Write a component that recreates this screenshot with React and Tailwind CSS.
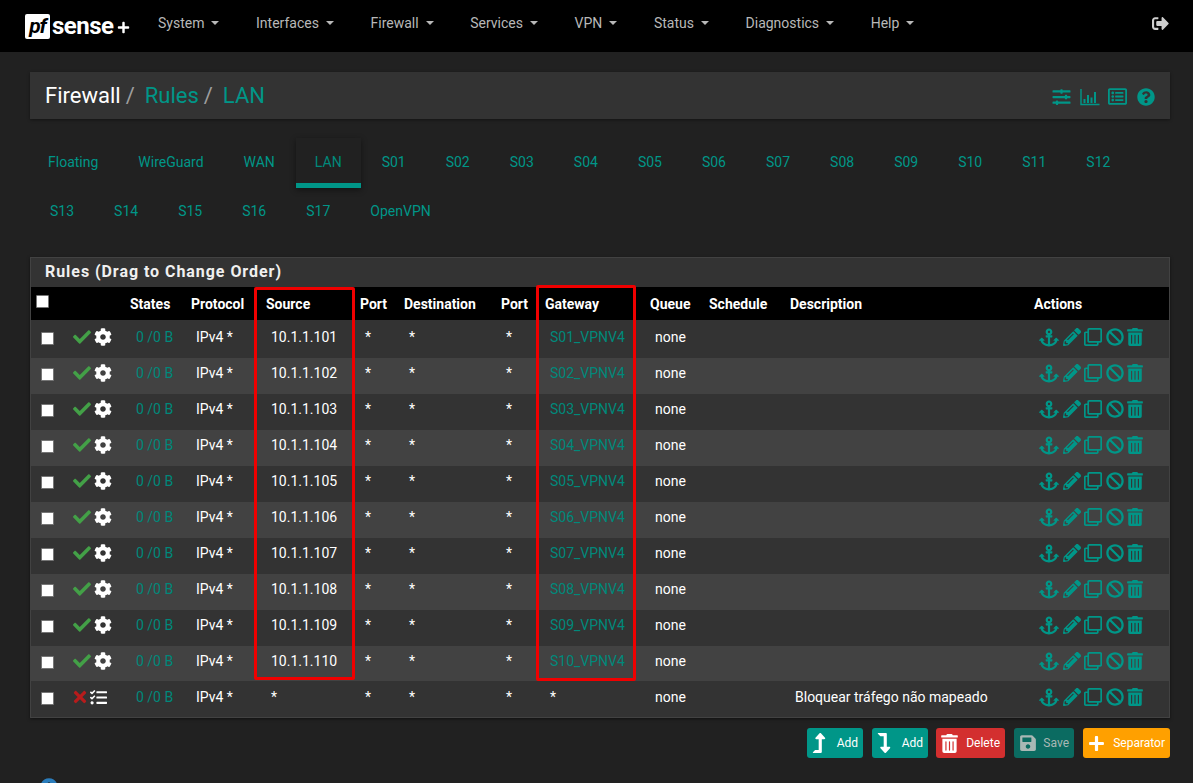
import React from "react";
import { FaCheck, FaCog, FaAnchor, FaPencilAlt, FaRegClone, FaBan, FaTrashAlt, FaSlidersH, FaRegListAlt, FaQuestionCircle, FaSignOutAlt, FaLevelUpAlt, FaLevelDownAlt, FaSave, FaPlus, FaTimes, FaTasks, FaInfoCircle } from "react-icons/fa";

const nav = ["System", "Interfaces", "Firewall", "Services", "VPN", "Status", "Diagnostics", "Help"];
const tabsTop = ["Floating", "WireGuard", "WAN", "LAN", "S01", "S02", "S03", "S04", "S05", "S06", "S07", "S08", "S09", "S10", "S11", "S12"];
const tabsBottom = ["S13", "S14", "S15", "S16", "S17", "OpenVPN"];
const heads = ["", "", "States", "Protocol", "Source", "Port", "Destination", "Port", "Gateway", "Queue", "Schedule", "Description", "Actions"];
const widths = [35, 59, 61, 75, 94, 44, 97, 44, 105, 59, 81, 244, 140];
const rows = Array.from({ length: 10 }, (_, i) => ({
  source: `10.1.1.1${String(i + 1).padStart(2, "0")}`,
  gateway: `S${String(i + 1).padStart(2, "0")}_VPNV4`,
  desc: "",
}));
rows.push({ source: "*", gateway: "*", desc: "Bloquear tráfego não mapeado", blocked: true });

function ChartIcon() {
  return (
    <svg width="20" height="18" viewBox="0 0 20 18" fill="none" stroke="currentColor">
      <path d="M1 1V16.5H19.5" strokeWidth="1.4" />
      <path d="M4.5 15V11M8 15V7M11.5 15V9.5M15 15V4" strokeWidth="2" />
    </svg>
  );
}

function Btn({ icon, label, className, textClass = "text-white" }) {
  return (
    <div className={`h-[30px] rounded-[3px] flex items-center justify-between px-[5px] text-[12px] ${className} ${textClass}`}>
      {icon}
      <span>{label}</span>
    </div>
  );
}

function Row({ r, i }) {
  const bg = i % 2 === 0 ? "bg-[#333333]" : "bg-[#424242]";
  const pt = i === 0 ? "pt-[7px]" : i === 10 ? "pt-[6px]" : "pt-[5px]";
  const cell = `align-top pl-[10px] pb-0 ${pt}`;
  const rowH = i === 0 ? "h-[38px]" : i === 9 ? "h-[35px]" : "h-[36px]";
  return (
    <tr className={`${bg} ${rowH} text-white`}>
      <td className={cell}>
        <div className="w-[13px] h-[13px] bg-white border border-[#767676] rounded-[1px] mt-[5px]" />
      </td>
      <td className={`align-top pl-[6px] ${pt}`}>
        <div className="flex items-center h-[20px]">
          {r.blocked ? (
            <>
              <FaTimes className="text-[#b71c1c] w-[16px] h-[18px]" />
              <FaTasks className="text-white w-[19px] h-[17px] ml-[1px]" />
            </>
          ) : (
            <>
              <FaCheck className="text-[#43a047] w-[20px] h-[18px]" />
              <FaCog className="text-white w-[18px] h-[18px] ml-[2px]" />
            </>
          )}
        </div>
      </td>
      <td className={`${cell} pl-[11px] text-[#00897b]`}>0 /0 B</td>
      <td className={cell}>IPv4 *</td>
      <td className={cell}>{r.source}</td>
      <td className={cell}>*</td>
      <td className={cell}>*</td>
      <td className={cell}>*</td>
      <td className={`${cell} pl-[9px] ${r.blocked ? "" : "text-[#00897b]"}`}>{r.gateway}</td>
      <td className={cell}>none</td>
      <td className={cell}></td>
      <td className={cell}>{r.desc}</td>
      <td className={cell}>
        <div className="flex items-center h-[20px] text-[#009688]">
          <FaAnchor className="w-[20px] h-[19px]" />
          <FaPencilAlt className="w-[18px] h-[18px] ml-[4px]" />
          <FaRegClone className="w-[18px] h-[18px] ml-[3px]" />
          <FaBan className="w-[18px] h-[18px] ml-[4px]" />
          <FaTrashAlt className="w-[16px] h-[18px] ml-[3px]" />
        </div>
      </td>
    </tr>
  );
}

export default function App() {
  return (
    <div className="h-[783px] w-[1193px] overflow-hidden bg-[#212121] [font-family:Roboto,sans-serif] text-[14px] leading-[20px]">
      <header className="h-[52px] bg-black flex items-center relative">
        <div className="ml-[25px] w-[107px] flex items-center">
          <div className="w-[25px] h-[25px] bg-white rounded-[2px] flex items-center justify-center text-black font-bold italic text-[21px] leading-none tracking-[-1px]">pf</div>
          <span className="text-white font-bold text-[24px] leading-none ml-[2px] tracking-[-0.5px]">sense</span>
          <FaPlus className="text-white w-[13px] h-[13px] ml-[3px] mt-[2px]" />
        </div>
        <nav className="ml-[26px] flex items-center gap-[36.6px] text-[#b8b8b8] -mt-[7px]">
          {nav.map((n) => (
            <div key={n} className="flex items-center">
              <span>{n}</span>
              <span className="ml-[7px] w-0 h-0 border-x-[4px] border-x-transparent border-t-[4px] border-t-[#b8b8b8]" />
            </div>
          ))}
        </nav>
        <FaSignOutAlt className="absolute right-[23px] top-[15px] text-[#cfcfcf] w-[19px] h-[17px]" />
      </header>

      <div className="mt-[20px] ml-[30px] mr-[23px] h-[47px] bg-[#333333] shadow-[0_1px_3px_rgba(0,0,0,0.4)] flex items-center justify-between pl-[15px] pr-[15px]">
        <div className="text-[22px] leading-[26px] flex text-[#009688]">
          <span className="text-white">Firewall</span>
          <span className="text-[#9e9e9e] ml-[5px]">/</span>
          <span className="ml-[10px]">Rules</span>
          <span className="text-[#9e9e9e] ml-[5px]">/</span>
          <span className="ml-[10px]">LAN</span>
        </div>
        <div className="flex items-center text-[#009688] pt-[2px]">
          <FaSlidersH className="w-[19px] h-[18px]" />
          <span className="ml-[9px] flex"><ChartIcon /></span>
          <FaRegListAlt className="w-[19px] h-[19px] ml-[8px]" />
          <FaQuestionCircle className="w-[18px] h-[18px] ml-[10px]" />
        </div>
      </div>

      <div className="mt-[19px] text-[#009688]">
        <div className="ml-[28px] flex">
          {tabsTop.map((t) =>
            t === "LAN" ? (
              <div key={t} className="h-[50px] ml-[1px] mr-[1px] px-[19px] pt-[14px] border-b-[5px] border-b-[#009688] shadow-[0_2px_6px_rgba(0,0,0,0.45)] text-[#00897b]">
                {t}
              </div>
            ) : (
              <div key={t} className="h-[50px] px-[20px] pt-[14px]">{t}</div>
            )
          )}
        </div>
        <div className="ml-[30px] flex">
          {tabsBottom.map((t) => (
            <div key={t} className="h-[49px] px-[20px] pt-[13px]">{t}</div>
          ))}
        </div>
      </div>

      <section className="relative mt-[20px] ml-[30px] mr-[23px] border border-[#424242] bg-[#333333] shadow-[0_1px_3px_rgba(0,0,0,0.5)]">
        <h2 className="h-[29px] pl-[14px] pt-[4px] text-[#f0f0f0] font-bold text-[16px] tracking-[0.95px]">Rules (Drag to Change Order)</h2>
        <table className="w-full table-fixed border-collapse">
          <colgroup>
            {widths.map((w, i) => (
              <col key={i} style={{ width: w }} />
            ))}
          </colgroup>
          <thead>
            <tr className="bg-black h-[33px] text-white">
              <th className="text-left pl-[5px] align-top pt-[8px]">
                <div className="w-[13px] h-[13px] bg-white border border-[#767676] rounded-[1px]" />
              </th>
              {heads.slice(1).map((h, i) => (
                <th key={i} className="text-left pl-[5px] font-bold whitespace-nowrap">{h}</th>
              ))}
            </tr>
          </thead>
          <tbody>
            {rows.map((r, i) => (
              <Row key={i} r={r} i={i} />
            ))}
          </tbody>
        </table>
        <div className="absolute left-[223px] top-[29px] w-[101px] h-[393px] border-[3px] border-[#f00000] rounded-[2px]" />
        <div className="absolute left-[505px] top-[27px] w-[100px] h-[396px] border-[3px] border-[#f00000] rounded-[2px]" />
      </section>

      <div className="mt-[10px] mr-[23px] flex justify-end">
        <Btn className="w-[56px] bg-[#009688]" label="Add" icon={<FaLevelUpAlt className="w-[14px] h-[20px]" />} />
        <Btn className="w-[56px] ml-[9px] bg-[#009688]" label="Add" icon={<FaLevelDownAlt className="w-[14px] h-[20px]" />} />
        <Btn className="w-[69px] ml-[8px] bg-[#d32f2f]" label="Delete" icon={<FaTrashAlt className="w-[17px] h-[19px]" />} />
        <Btn className="w-[60px] ml-[9px] bg-[#0b6b61]" textClass="text-[#a9b8b5]" label="Save" icon={<FaSave className="w-[18px] h-[18px]" />} />
        <Btn className="w-[87px] ml-[9px] bg-[#ffa000]" label="Separator" icon={<FaPlus className="w-[17px] h-[17px]" />} />
      </div>

      <FaInfoCircle className="ml-[40px] mt-[20px] w-[18px] h-[18px] text-[#2b7dbc]" />
    </div>
  );
}
